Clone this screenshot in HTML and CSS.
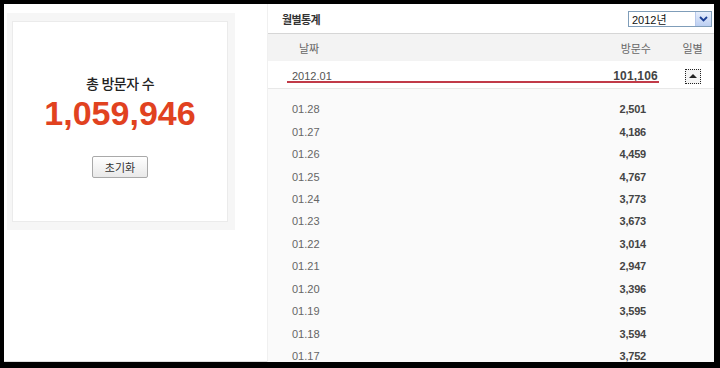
FILE: index.html
```html
<!DOCTYPE html>
<html lang="ko">
<head>
    <meta charset="UTF-8">
    <title>방문자 통계</title>
    <link rel="stylesheet" href="styles.css">
</head>
<body>
    <div class="screen">
        <div class="summary">
            <div class="summary-card">
                <div class="summary-inner">
                    <div class="summary-title">총 방문자 수</div>
                    <div class="summary-total">1,059,946</div>
                    <button class="reset-btn">초기화</button>
                </div>
            </div>
        </div>

        <div class="stats">
            <div class="stats-head">
                <h2>월별통계</h2>
                <div class="year-select">
                    <span>2012년</span>
                    <span class="year-arrow">
                        <svg width="9" height="6" viewBox="0 0 9 6"><path d="M1 1 L4.5 4.5 L8 1" fill="none" stroke="#1c3f94" stroke-width="1.8"/></svg>
                    </span>
                </div>
            </div>

            <div class="row row-header">
                <span class="date">날짜</span>
                <span class="count">방문수</span>
                <span class="daily">일별</span>
            </div>

            <div class="row row-month">
                <span class="date">2012.01</span>
                <span class="count">101,106</span>
                <span class="daily"><span class="toggle"></span></span>
            </div>

            <div class="days">
                <div class="row row-day"><span class="date">01.28</span><span class="count">2,501</span><span class="daily"></span></div>
                <div class="row row-day"><span class="date">01.27</span><span class="count">4,186</span><span class="daily"></span></div>
                <div class="row row-day"><span class="date">01.26</span><span class="count">4,459</span><span class="daily"></span></div>
                <div class="row row-day"><span class="date">01.25</span><span class="count">4,767</span><span class="daily"></span></div>
                <div class="row row-day"><span class="date">01.24</span><span class="count">3,773</span><span class="daily"></span></div>
                <div class="row row-day"><span class="date">01.23</span><span class="count">3,673</span><span class="daily"></span></div>
                <div class="row row-day"><span class="date">01.22</span><span class="count">3,014</span><span class="daily"></span></div>
                <div class="row row-day"><span class="date">01.21</span><span class="count">2,947</span><span class="daily"></span></div>
                <div class="row row-day"><span class="date">01.20</span><span class="count">3,396</span><span class="daily"></span></div>
                <div class="row row-day"><span class="date">01.19</span><span class="count">3,595</span><span class="daily"></span></div>
                <div class="row row-day"><span class="date">01.18</span><span class="count">3,594</span><span class="daily"></span></div>
                <div class="row row-day"><span class="date">01.17</span><span class="count">3,752</span><span class="daily"></span></div>
            </div>
        </div>
    </div>
</body>
</html>
```

FILE: styles.css
```css
html, body {
    margin: 0;
    height: 368px;
    background: #000;
    overflow: hidden;
}

body {
    font-family: 'Liberation Sans', 'Noto Sans CJK KR', sans-serif;
    color: #555;
}

.screen {
    margin: 4px 6px 6px 4px;
    height: 358px;
    background: #fff;
    display: flex;
    overflow: hidden;
    box-shadow: inset -1px -1px 0 #ddd;
}

/* left summary */
.summary {
    padding: 9px 0 0 3px;
    width: 228px;
    flex-shrink: 0;
}

.summary-card {
    background: #f6f6f6;
    padding: 8px 7px 8px 5px;
}

.summary-inner {
    height: 199px;
    background: #fff;
    border: 1px solid #ebebeb;
    text-align: center;
}

.summary-title {
    margin-top: 53px;
    font-family: 'Noto Sans CJK KR', sans-serif;
    font-size: 14px;
    line-height: 16px;
    font-weight: 500;
    letter-spacing: -0.6px;
    color: #222;
}

.summary-total {
    margin-top: 5px;
    font-size: 34px;
    line-height: 34px;
    font-weight: bold;
    color: #e1421f;
}

.reset-btn {
    margin-top: 26px;
    width: 56px;
    height: 22px;
    padding: 0;
    font-family: 'Noto Sans CJK KR', sans-serif;
    font-size: 11px;
    color: #333;
    background: linear-gradient(#fff, #e9e9e9);
    border: 1px solid #a9a9a9;
    border-radius: 2px;
}

/* right stats */
.stats {
    margin-left: 32px;
    flex: 1;
    display: flex;
    flex-direction: column;
    background: #fafafa;
    border-left: 1px solid #f0f0f0;
}

.stats > * {
    flex-shrink: 0;
}

.stats-head {
    height: 29px;
    display: flex;
    align-items: center;
    justify-content: space-between;
    padding: 0 2px 0 14px;
    background: #fff;
    border-bottom: 1px solid #d6d6d6;
}

.stats-head h2 {
    margin: 0;
    font-family: 'Noto Sans CJK KR', sans-serif;
    font-size: 11px;
    font-weight: bold;
    letter-spacing: -0.6px;
    color: #333;
}

.year-select {
    width: 79px;
    height: 14px;
    display: flex;
    align-items: center;
    justify-content: space-between;
    border: 1px solid #7f9db9;
    background: #fff;
    font-size: 11px;
    color: #111;
    padding-left: 3px;
    margin-top: 1px;
}

.year-arrow {
    width: 15px;
    height: 14px;
    display: flex;
    align-items: center;
    justify-content: center;
    background: linear-gradient(#e6eefc, #bccff2);
    border-left: 1px solid #b7c8eb;
}

.row {
    display: flex;
    align-items: center;
    position: relative;
}

.date {
    flex: 1;
    padding-left: 24px;
}

.count {
    text-align: right;
    font-weight: bold;
}

.daily {
    width: 43px;
    display: flex;
    justify-content: center;
}

.row-header {
    height: 27px;
    background: #f3f3f3;
    font-family: 'Noto Sans CJK KR', sans-serif;
    font-size: 11px;
    color: #666;
}

.row-header .date {
    padding-left: 31px;
}

.row-header .count {
    font-weight: normal;
    padding-right: 20px;
}

.row-month {
    height: 24px;
    padding-top: 3px;
    background: #fff;
    border-bottom: 1px solid #e8e8e8;
    font-size: 11px;
    color: #555;
}

.row-month .count {
    font-size: 12px;
    padding-right: 13px;
    color: #444;
    letter-spacing: 0.2px;
}

/* hand drawn red underline over the month row */
.row-month::after {
    content: '';
    position: absolute;
    left: 19px;
    right: 55px;
    top: 20px;
    height: 2px;
    background: #c13a48;
}

.toggle {
    width: 14px;
    height: 13px;
    border: 1px dotted #222;
    background: #f4f4f4;
    position: relative;
}

.toggle::after {
    content: '';
    position: absolute;
    left: 3px;
    top: 4px;
    border-left: 4px solid transparent;
    border-right: 4px solid transparent;
    border-bottom: 4px solid #222;
}

.days {
    padding-top: 9px;
}

.row-day {
    height: 22.45px;
    font-size: 11px;
    color: #666;
}

.row-day .count {
    padding-right: 25px;
    color: #444;
    letter-spacing: -0.2px;
}
```
